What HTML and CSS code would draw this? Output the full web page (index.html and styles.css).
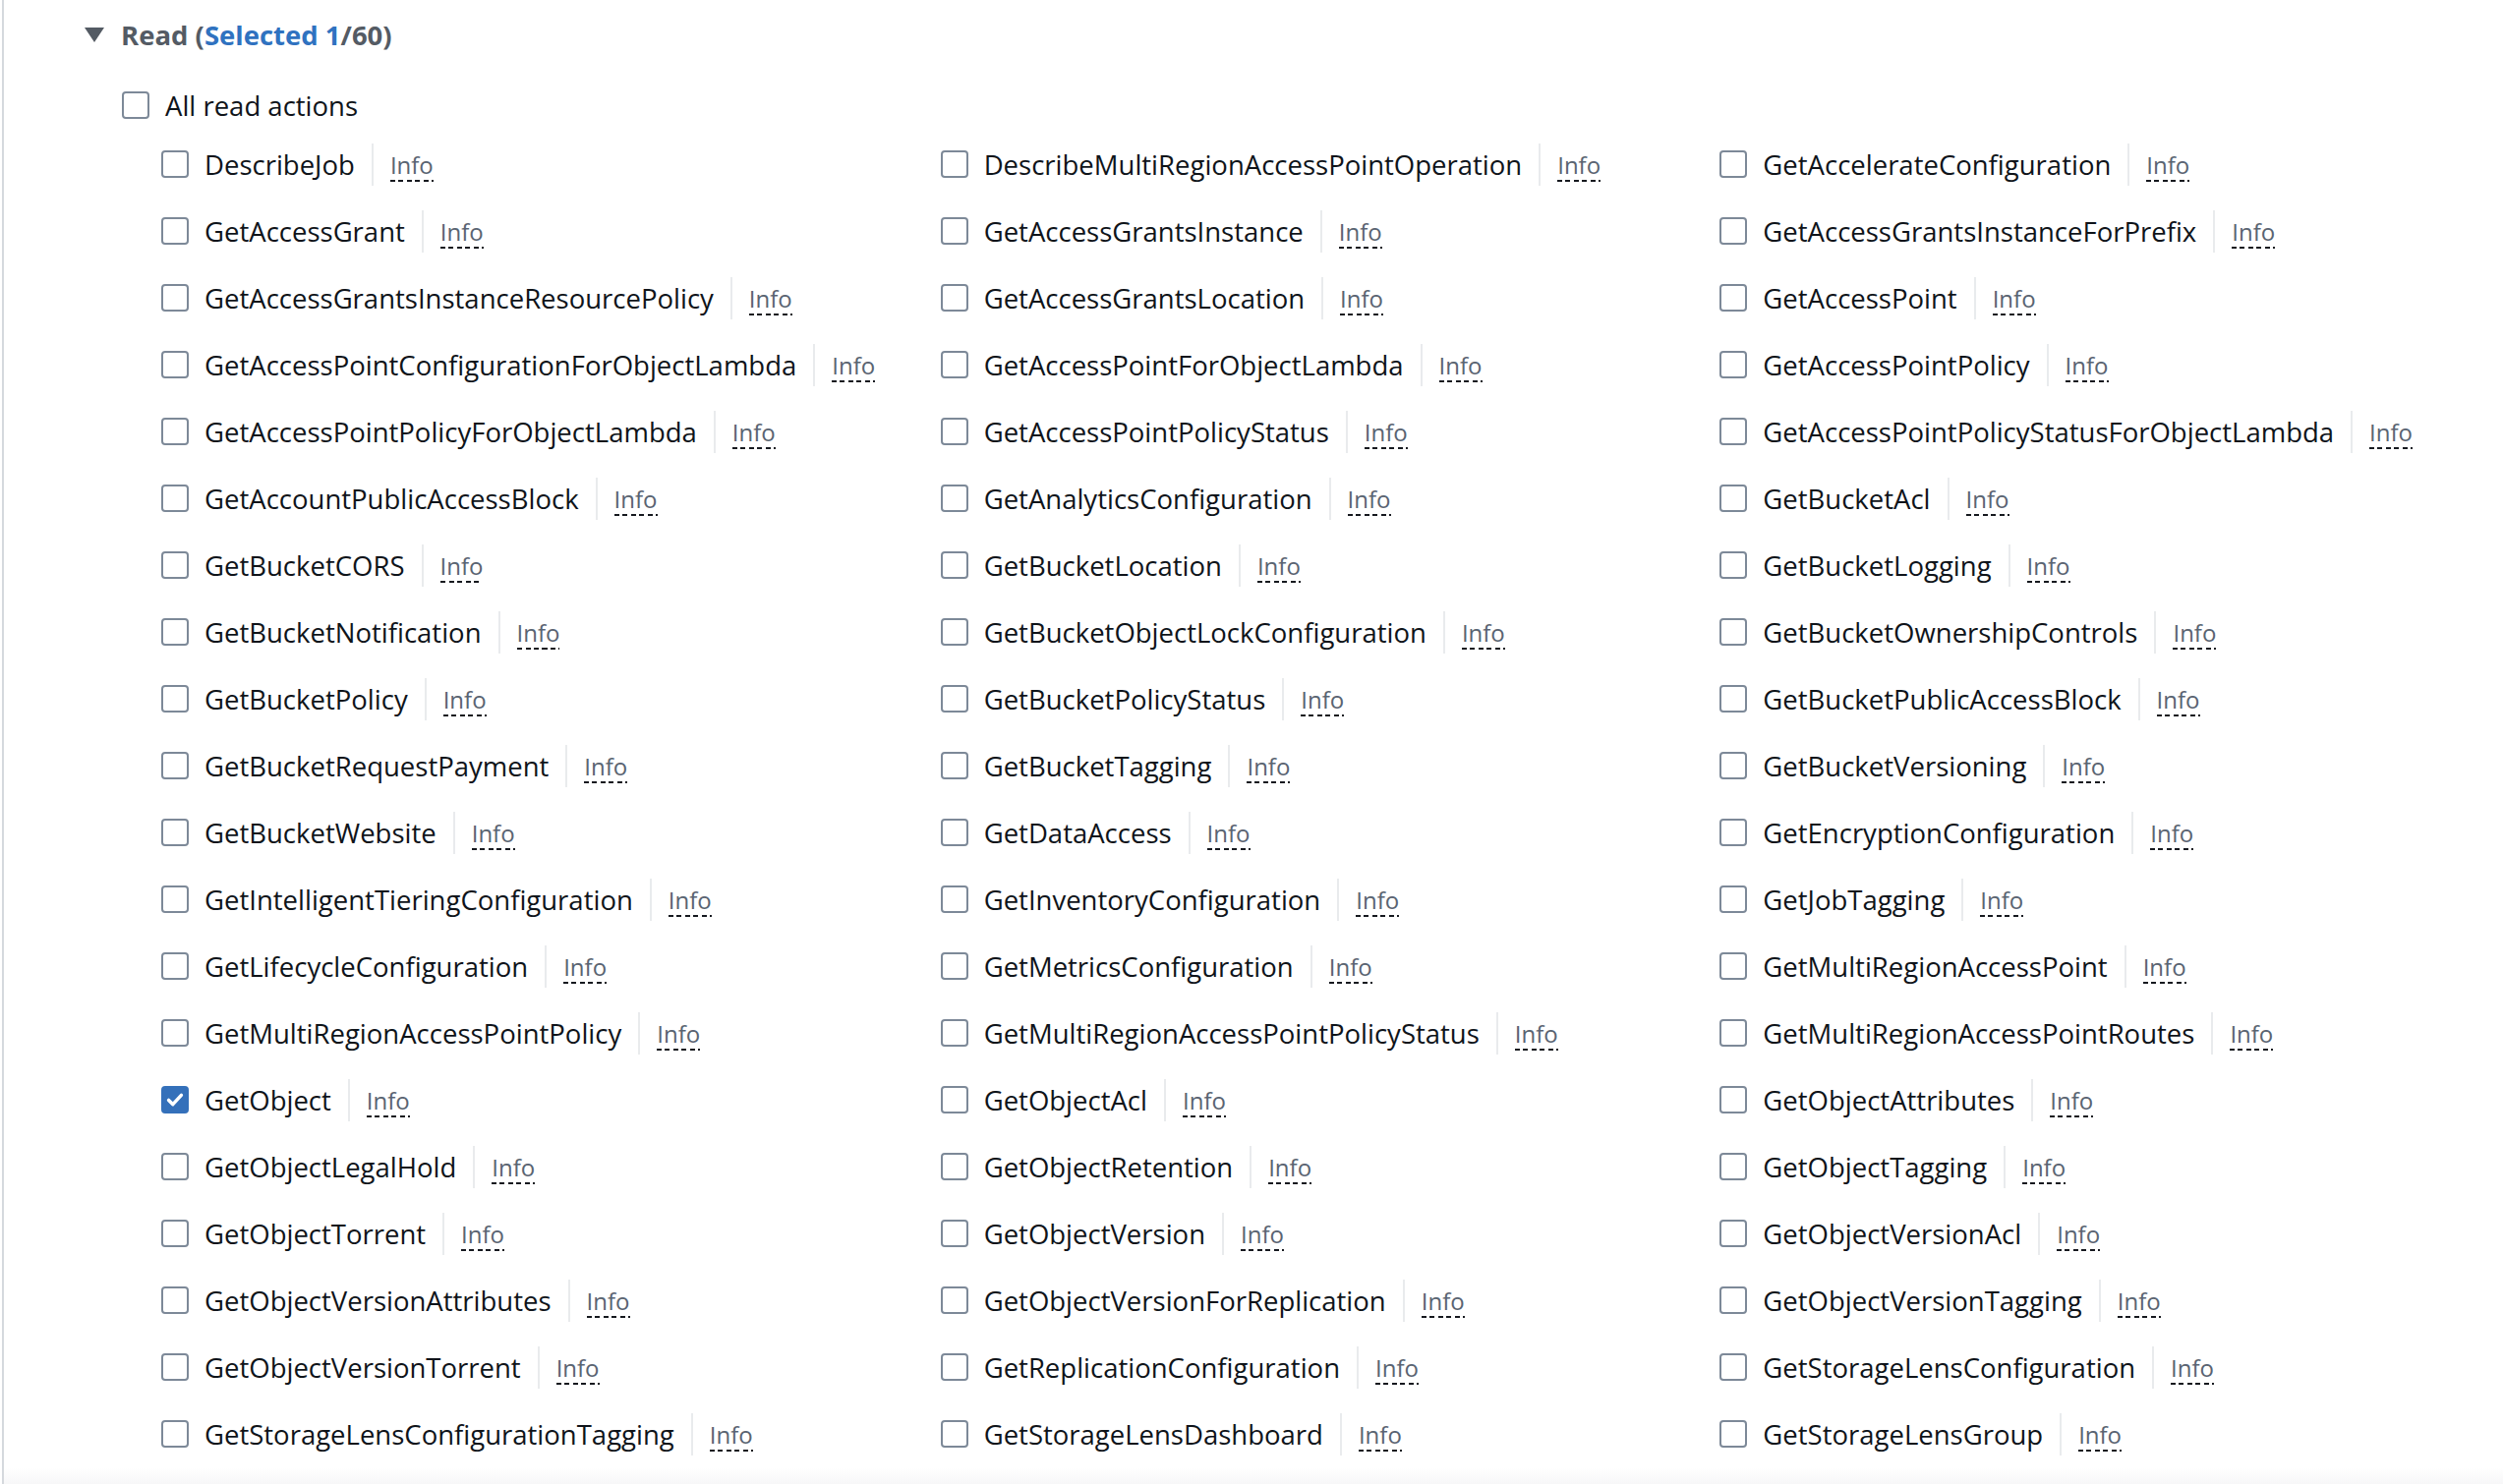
FILE: index.html
```html
<!DOCTYPE html>
<html>
<head>
    <title>Read actions</title>
    <link rel="stylesheet" href="styles.css">
</head>
<body>
    <div class="panel">
        <div class="section">
            <div class="section-header">
                <span class="caret"></span>
                <span class="section-title">Read (<span class="selected">Selected 1</span>/60)</span>
            </div>

            <label class="all-actions">
                <span class="box"></span>
                <span class="name">All read actions</span>
            </label>

            <div class="actions">
                <label class="action"><span class="box"></span><span class="name">DescribeJob</span><span class="info">Info</span></label>
                <label class="action"><span class="box"></span><span class="name">DescribeMultiRegionAccessPointOperation</span><span class="info">Info</span></label>
                <label class="action"><span class="box"></span><span class="name">GetAccelerateConfiguration</span><span class="info">Info</span></label>

                <label class="action"><span class="box"></span><span class="name">GetAccessGrant</span><span class="info">Info</span></label>
                <label class="action"><span class="box"></span><span class="name">GetAccessGrantsInstance</span><span class="info">Info</span></label>
                <label class="action"><span class="box"></span><span class="name">GetAccessGrantsInstanceForPrefix</span><span class="info">Info</span></label>

                <label class="action"><span class="box"></span><span class="name">GetAccessGrantsInstanceResourcePolicy</span><span class="info">Info</span></label>
                <label class="action"><span class="box"></span><span class="name">GetAccessGrantsLocation</span><span class="info">Info</span></label>
                <label class="action"><span class="box"></span><span class="name">GetAccessPoint</span><span class="info">Info</span></label>

                <label class="action"><span class="box"></span><span class="name">GetAccessPointConfigurationForObjectLambda</span><span class="info">Info</span></label>
                <label class="action"><span class="box"></span><span class="name">GetAccessPointForObjectLambda</span><span class="info">Info</span></label>
                <label class="action"><span class="box"></span><span class="name">GetAccessPointPolicy</span><span class="info">Info</span></label>

                <label class="action"><span class="box"></span><span class="name">GetAccessPointPolicyForObjectLambda</span><span class="info">Info</span></label>
                <label class="action"><span class="box"></span><span class="name">GetAccessPointPolicyStatus</span><span class="info">Info</span></label>
                <label class="action"><span class="box"></span><span class="name">GetAccessPointPolicyStatusForObjectLambda</span><span class="info">Info</span></label>

                <label class="action"><span class="box"></span><span class="name">GetAccountPublicAccessBlock</span><span class="info">Info</span></label>
                <label class="action"><span class="box"></span><span class="name">GetAnalyticsConfiguration</span><span class="info">Info</span></label>
                <label class="action"><span class="box"></span><span class="name">GetBucketAcl</span><span class="info">Info</span></label>

                <label class="action"><span class="box"></span><span class="name">GetBucketCORS</span><span class="info">Info</span></label>
                <label class="action"><span class="box"></span><span class="name">GetBucketLocation</span><span class="info">Info</span></label>
                <label class="action"><span class="box"></span><span class="name">GetBucketLogging</span><span class="info">Info</span></label>

                <label class="action"><span class="box"></span><span class="name">GetBucketNotification</span><span class="info">Info</span></label>
                <label class="action"><span class="box"></span><span class="name">GetBucketObjectLockConfiguration</span><span class="info">Info</span></label>
                <label class="action"><span class="box"></span><span class="name">GetBucketOwnershipControls</span><span class="info">Info</span></label>

                <label class="action"><span class="box"></span><span class="name">GetBucketPolicy</span><span class="info">Info</span></label>
                <label class="action"><span class="box"></span><span class="name">GetBucketPolicyStatus</span><span class="info">Info</span></label>
                <label class="action"><span class="box"></span><span class="name">GetBucketPublicAccessBlock</span><span class="info">Info</span></label>

                <label class="action"><span class="box"></span><span class="name">GetBucketRequestPayment</span><span class="info">Info</span></label>
                <label class="action"><span class="box"></span><span class="name">GetBucketTagging</span><span class="info">Info</span></label>
                <label class="action"><span class="box"></span><span class="name">GetBucketVersioning</span><span class="info">Info</span></label>

                <label class="action"><span class="box"></span><span class="name">GetBucketWebsite</span><span class="info">Info</span></label>
                <label class="action"><span class="box"></span><span class="name">GetDataAccess</span><span class="info">Info</span></label>
                <label class="action"><span class="box"></span><span class="name">GetEncryptionConfiguration</span><span class="info">Info</span></label>

                <label class="action"><span class="box"></span><span class="name">GetIntelligentTieringConfiguration</span><span class="info">Info</span></label>
                <label class="action"><span class="box"></span><span class="name">GetInventoryConfiguration</span><span class="info">Info</span></label>
                <label class="action"><span class="box"></span><span class="name">GetJobTagging</span><span class="info">Info</span></label>

                <label class="action"><span class="box"></span><span class="name">GetLifecycleConfiguration</span><span class="info">Info</span></label>
                <label class="action"><span class="box"></span><span class="name">GetMetricsConfiguration</span><span class="info">Info</span></label>
                <label class="action"><span class="box"></span><span class="name">GetMultiRegionAccessPoint</span><span class="info">Info</span></label>

                <label class="action"><span class="box"></span><span class="name">GetMultiRegionAccessPointPolicy</span><span class="info">Info</span></label>
                <label class="action"><span class="box"></span><span class="name">GetMultiRegionAccessPointPolicyStatus</span><span class="info">Info</span></label>
                <label class="action"><span class="box"></span><span class="name">GetMultiRegionAccessPointRoutes</span><span class="info">Info</span></label>

                <label class="action"><span class="box checked"><svg viewBox="0 0 28 28"><path d="M6.5 14.5l5 5 10-11"/></svg></span><span class="name">GetObject</span><span class="info">Info</span></label>
                <label class="action"><span class="box"></span><span class="name">GetObjectAcl</span><span class="info">Info</span></label>
                <label class="action"><span class="box"></span><span class="name">GetObjectAttributes</span><span class="info">Info</span></label>

                <label class="action"><span class="box"></span><span class="name">GetObjectLegalHold</span><span class="info">Info</span></label>
                <label class="action"><span class="box"></span><span class="name">GetObjectRetention</span><span class="info">Info</span></label>
                <label class="action"><span class="box"></span><span class="name">GetObjectTagging</span><span class="info">Info</span></label>

                <label class="action"><span class="box"></span><span class="name">GetObjectTorrent</span><span class="info">Info</span></label>
                <label class="action"><span class="box"></span><span class="name">GetObjectVersion</span><span class="info">Info</span></label>
                <label class="action"><span class="box"></span><span class="name">GetObjectVersionAcl</span><span class="info">Info</span></label>

                <label class="action"><span class="box"></span><span class="name">GetObjectVersionAttributes</span><span class="info">Info</span></label>
                <label class="action"><span class="box"></span><span class="name">GetObjectVersionForReplication</span><span class="info">Info</span></label>
                <label class="action"><span class="box"></span><span class="name">GetObjectVersionTagging</span><span class="info">Info</span></label>

                <label class="action"><span class="box"></span><span class="name">GetObjectVersionTorrent</span><span class="info">Info</span></label>
                <label class="action"><span class="box"></span><span class="name">GetReplicationConfiguration</span><span class="info">Info</span></label>
                <label class="action"><span class="box"></span><span class="name">GetStorageLensConfiguration</span><span class="info">Info</span></label>

                <label class="action"><span class="box"></span><span class="name">GetStorageLensConfigurationTagging</span><span class="info">Info</span></label>
                <label class="action"><span class="box"></span><span class="name">GetStorageLensDashboard</span><span class="info">Info</span></label>
                <label class="action"><span class="box"></span><span class="name">GetStorageLensGroup</span><span class="info">Info</span></label>
            </div>
        </div>
        <div class="panel-footer"></div>
    </div>
</body>
</html>
```

FILE: styles.css
```css
html, body {
    height: 100%;
}

body {
    margin: 0;
    background: white;
    font-family: "Open Sans", Arial, sans-serif;
    color: #0f141a;
}

.panel {
    margin-left: 2px;
    min-height: 100%;
    border-left: 2px solid #d5d9dd;
    display: flex;
    flex-direction: column;
}

.section {
    padding: 15px 0 0 82px;
}

.section-header {
    display: flex;
    align-items: center;
    gap: 17px;
    height: 40px;
}

.caret {
    width: 0;
    height: 0;
    border-left: 10px solid transparent;
    border-right: 10px solid transparent;
    border-top: 15px solid #545b64;
}

.section-title {
    font-size: 27.5px;
    font-weight: bold;
    color: #545b64;
}

.selected {
    color: #2f72c0;
}

.all-actions {
    display: flex;
    align-items: center;
    gap: 16px;
    height: 40px;
    margin: 32px 0 0 38px;
    font-size: 27.5px;
}

.actions {
    display: grid;
    grid-template-columns: repeat(3, 1fr);
    grid-auto-rows: 68px;
    width: 2378px;
    margin: 6px 0 0 78px;
}

.action {
    display: flex;
    align-items: center;
    font-size: 27.5px;
}

.box {
    flex: none;
    box-sizing: border-box;
    width: 28px;
    height: 28px;
    border: 2px solid #7d8998;
    border-radius: 4px;
    background: white;
}

.box.checked {
    background: #3470ba;
    border-color: #3470ba;
}

.box svg {
    display: block;
    width: 24px;
    height: 24px;
    fill: none;
    stroke: white;
    stroke-width: 4;
    stroke-linecap: round;
    stroke-linejoin: round;
}

.action .name {
    margin-left: 16px;
    padding-right: 17px;
    border-right: 2px solid #e9ebed;
    line-height: 43px;
}

.info {
    margin-left: 17px;
    font-size: 24px;
    color: #5a6472;
    line-height: 30px;
    padding-bottom: 2px;
    background: repeating-linear-gradient(to right, #16191f 0 5px, transparent 5px 8.5px) bottom / 100% 2px no-repeat;
    margin-top: 4px;
}

.panel-footer {
    flex: 1;
    background: linear-gradient(#ffffff, #f7f7f8);
}
```
